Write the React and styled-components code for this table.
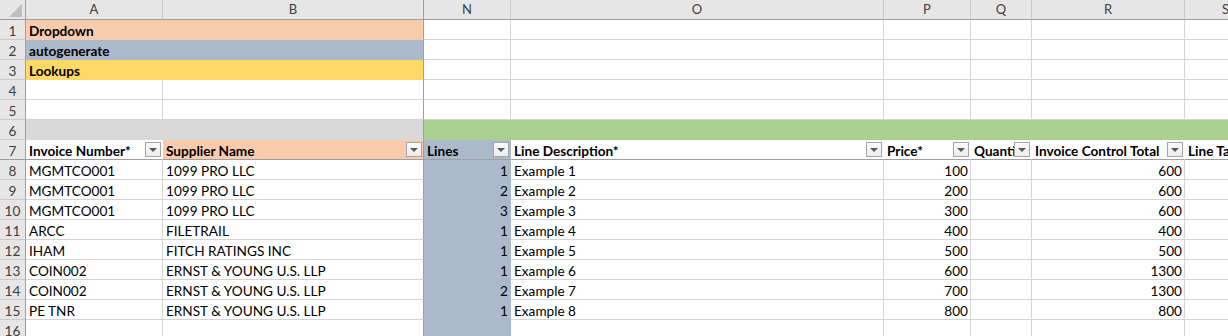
import React from "react";
import styled, { createGlobalStyle } from "styled-components";

const GRID = "#d4d4d4";
const FREEZE = "#9e9e9e";
const HEAD_BG = "#e6e6e6";

const PEACH = "#f8cbad";
const SLATE = "#acb9ca";
const GOLD = "#ffd966";
const GREY = "#d9d9d9";
const GREEN = "#a9d08e";
const WHITE = "#ffffff";

const Global = createGlobalStyle`
  body {
    margin: 0;
    background: #fff;
    overflow: hidden;
    font-family: Lato, "Open Sans", sans-serif;
  }
`;

const Viewport = styled.div`
  width: 1228px;
  height: 336px;
  overflow: hidden;
`;

const Sheet = styled.div`
  display: grid;
  grid-template-columns: 26px 137px 261px 87px 373px 87px 61px 153px 82px;
  grid-auto-rows: 20px;
  width: max-content;
`;

const Corner = styled.div`
  background: ${HEAD_BG};
  border-right: 1px solid ${FREEZE};
  border-bottom: 1px solid ${FREEZE};
  display: flex;
  align-items: flex-end;
  justify-content: flex-end;
  padding: 0 3px 2px 0;
`;

const ColHead = styled.div`
  background: ${HEAD_BG};
  border-right: 1px solid ${(p) => (p.$freeze ? FREEZE : "#cacaca")};
  border-bottom: 1px solid ${FREEZE};
  color: #3f3f3f;
  font-size: 13px;
  line-height: 19px;
  text-align: center;
  overflow: hidden;
  white-space: nowrap;
`;

const RowHead = styled.div`
  background: ${HEAD_BG};
  border-right: 1px solid ${FREEZE};
  border-bottom: 1px solid ${(p) => (p.$freeze ? FREEZE : "#cacaca")};
  color: #3f3f3f;
  font-size: 13.6px;
  line-height: 18px;
  padding-top: 2px;
  text-align: center;
`;

const Cell = styled.div`
  box-sizing: border-box;
  background: ${(p) => p.$fill || WHITE};
  border-right: 1px solid
    ${(p) => (p.$freezeR ? FREEZE : p.$fill ? p.$fill : GRID)};
  border-bottom: 1px solid
    ${(p) => (p.$freezeB ? FREEZE : p.$fill ? p.$fill : GRID)};
  color: #000;
  font-size: 13.6px;
  font-weight: ${(p) => (p.$bold ? 700 : 400)};
  line-height: 18px;
  padding: 2px 2px 0 3px;
  text-align: ${(p) => (p.$right ? "right" : "left")};
  white-space: nowrap;
  overflow: ${(p) => (p.$spill ? "visible" : "hidden")};
  position: relative;
  z-index: ${(p) => (p.$spill ? 1 : 0)};
`;

const HeadCell = styled(Cell)`
  display: flex;
  align-items: flex-start;
  padding-right: 1px;
`;

const Label = styled.span`
  flex: 1;
  min-width: 0;
  overflow: hidden;
  white-space: nowrap;
`;

const FilterBtn = styled.span`
  flex: none;
  box-sizing: border-box;
  width: 16px;
  height: 15px;
  border: 1px solid #a6a6a6;
  background: linear-gradient(#fbfbfb, #ececec);
  display: flex;
  align-items: center;
  justify-content: center;

  &::after {
    content: "";
    border-left: 4px solid transparent;
    border-right: 4px solid transparent;
    border-top: 4px solid #5a5a5a;
    margin-top: 1px;
  }
`;

const columns = ["A", "B", "N", "O", "P", "Q", "R", "S"];

const legend = [
  { text: "Dropdown", fill: PEACH },
  { text: "autogenerate", fill: SLATE },
  { text: "Lookups", fill: GOLD },
];

const headers = [
  { text: "Invoice Number*", fill: WHITE },
  { text: "Supplier Name", fill: PEACH },
  { text: "Lines", fill: SLATE },
  { text: "Line Description*", fill: WHITE },
  { text: "Price*", fill: WHITE },
  { text: "Quantity", fill: WHITE },
  { text: "Invoice Control Total", fill: WHITE },
  { text: "Line Tax Amount", fill: WHITE },
];

const lines = [
  ["MGMTCO001", "1099 PRO LLC", 1, "Example 1", 100, 600],
  ["MGMTCO001", "1099 PRO LLC", 2, "Example 2", 200, 600],
  ["MGMTCO001", "1099 PRO LLC", 3, "Example 3", 300, 600],
  ["ARCC", "FILETRAIL", 1, "Example 4", 400, 400],
  ["IHAM", "FITCH RATINGS INC", 1, "Example 5", 500, 500],
  ["COIN002", "ERNST & YOUNG U.S. LLP", 1, "Example 6", 600, 1300],
  ["COIN002", "ERNST & YOUNG U.S. LLP", 2, "Example 7", 700, 1300],
  ["PE TNR", "ERNST & YOUNG U.S. LLP", 1, "Example 8", 800, 800],
];

const CornerMark = () => (
  <svg width="13" height="13" viewBox="0 0 13 13">
    <polygon points="13,0 13,13 0,13" fill="#bdbdbd" />
  </svg>
);

const EmptyRow = ({ n }) => (
  <>
    <RowHead>{n}</RowHead>
    {columns.map((c) => (
      <Cell key={c} $fill={c === "N" && n > 7 ? SLATE : undefined} $freezeR={c === "B"} />
    ))}
  </>
);

const App = () => {
  return (
    <Viewport>
      <Global />
      <Sheet>
        <Corner>
          <CornerMark />
        </Corner>
        {columns.map((c) => (
          <ColHead key={c} $freeze={c === "B"}>
            {c}
          </ColHead>
        ))}

        {legend.map((row, i) => (
          <React.Fragment key={row.text}>
            <RowHead>{i + 1}</RowHead>
            <Cell $fill={row.fill} $bold $spill>
              {row.text}
            </Cell>
            <Cell $fill={row.fill} $freezeR />
            {columns.slice(2).map((c) => (
              <Cell key={c} />
            ))}
          </React.Fragment>
        ))}

        <EmptyRow n={4} />
        <EmptyRow n={5} />

        <RowHead>6</RowHead>
        <Cell $fill={GREY} />
        <Cell $fill={GREY} $freezeR />
        {columns.slice(2).map((c) => (
          <Cell key={c} $fill={GREEN} />
        ))}

        <RowHead $freeze>7</RowHead>
        {headers.map((h, i) => (
          <HeadCell key={h.text} $fill={h.fill} $bold $freezeB $freezeR={i === 1}>
            <Label>{h.text}</Label>
            <FilterBtn />
          </HeadCell>
        ))}

        {lines.map((l, i) => (
          <React.Fragment key={i}>
            <RowHead>{i + 8}</RowHead>
            <Cell>{l[0]}</Cell>
            <Cell $freezeR>{l[1]}</Cell>
            <Cell $fill={SLATE} $right>
              {l[2]}
            </Cell>
            <Cell>{l[3]}</Cell>
            <Cell $right>{l[4]}</Cell>
            <Cell />
            <Cell $right>{l[5]}</Cell>
            <Cell />
          </React.Fragment>
        ))}

        <EmptyRow n={16} />
      </Sheet>
    </Viewport>
  );
};

export default App;
